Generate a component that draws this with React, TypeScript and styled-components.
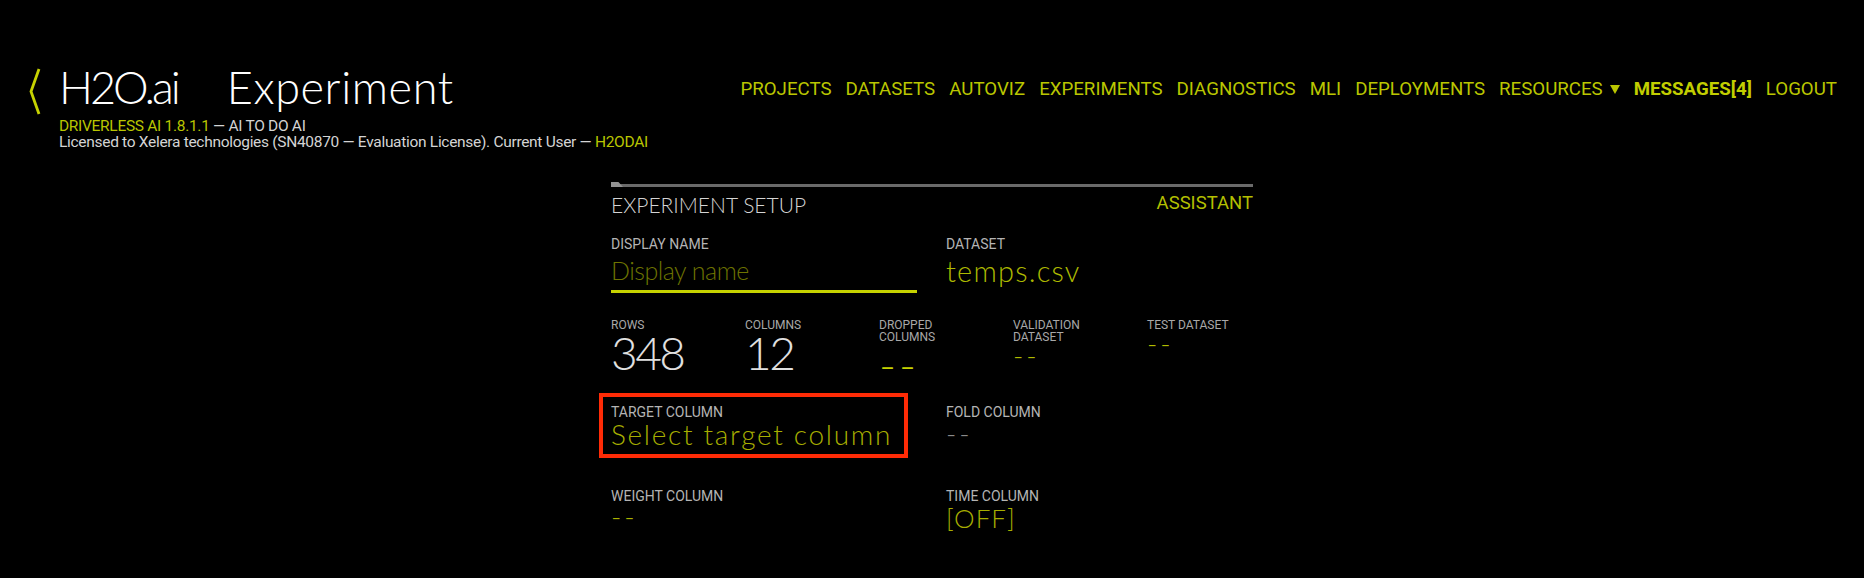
import React from 'react';
import styled, { createGlobalStyle } from 'styled-components';

const THIN = 'Lato, Roboto, "Liberation Sans", sans-serif';

const GlobalStyle = createGlobalStyle`
  html, body {
    margin: 0;
    padding: 0;
    background: #000;
  }
  body {
    font-family: Roboto, "Liberation Sans", sans-serif;
    color: #fff;
    overflow: hidden;
  }
  * { box-sizing: border-box; }
`;

const NAV_ITEMS = [
  { label: 'PROJECTS' },
  { label: 'DATASETS' },
  { label: 'AUTOVIZ' },
  { label: 'EXPERIMENTS' },
  { label: 'DIAGNOSTICS' },
  { label: 'MLI' },
  { label: 'DEPLOYMENTS' },
  { label: 'RESOURCES', caret: true },
  { label: 'MESSAGES[4]', bold: true },
  { label: 'LOGOUT' },
];

const Page = styled.div`
  min-height: 578px;
  background: #000;
`;

const Header = styled.header`
  display: flex;
  justify-content: space-between;
  align-items: flex-start;
  padding: 67px 27px 0 29px;
`;

const Brand = styled.div`
  display: flex;
  align-items: flex-start;
`;

const Chevron = styled.svg`
  flex-shrink: 0;
  margin-top: 1px;
`;

const BrandText = styled.div`
  margin-left: 18px;
`;

const Title = styled.h1`
  margin: -2px 0 8px;
  display: flex;
  gap: 49px;
  font-family: ${THIN};
  font-size: 45px;
  line-height: 45px;
  font-weight: 300;
  color: #fff;
`;

const TitlePart = styled.span<{ $spacing: number }>`
  letter-spacing: ${p => p.$spacing}px;
`;

const Meta = styled.div`
  font-size: 15.5px;
  line-height: 16px;
  color: #d4d4d4;
  letter-spacing: -0.3px;
  white-space: nowrap;
`;

const Accent = styled.span`
  color: #b9c500;
`;

const Nav = styled.nav`
  display: flex;
  align-items: center;
  gap: 14px;
  margin-top: 13.3px;
`;

const NavItem = styled.a<{ $bold?: boolean }>`
  display: flex;
  align-items: center;
  gap: 7px;
  font-size: 18.7px;
  line-height: 18.7px;
  font-weight: ${p => (p.$bold ? 700 : 400)};
  color: ${p => (p.$bold ? '#c2ce00' : '#bac600')};
  text-decoration: none;
  white-space: nowrap;
`;

const Panel = styled.main`
  width: 642px;
  margin: 34px auto 0;
`;

const Progress = styled.div`
  position: relative;
  height: 3px;
  background: #6a6a6a;

  &::before {
    content: '';
    position: absolute;
    left: 0;
    top: -2px;
    width: 12px;
    height: 5px;
    background: #929292;
    clip-path: polygon(0 0, 62% 0, 100% 100%, 0 100%);
  }
`;

const PanelHead = styled.div`
  display: flex;
  justify-content: space-between;
  align-items: flex-start;
  margin-top: 8px;
`;

const PanelTitle = styled.h2`
  margin: -1px 0 1px;
  font-family: ${THIN};
  font-size: 21px;
  line-height: 21px;
  font-weight: 300;
  color: #d4d4d4;
`;

const Assistant = styled.a`
  margin-top: -1.5px;
  font-size: 18.5px;
  line-height: 18.5px;
  color: #b3bf00;
  text-decoration: none;
`;

const FieldRow = styled.div<{ $gap: number }>`
  display: grid;
  grid-template-columns: 335px 1fr;
  margin-top: ${p => p.$gap}px;
`;

const Field = styled.div<{ $highlight?: boolean }>`
  position: relative;

  ${p =>
    p.$highlight &&
    `
    &::after {
      content: '';
      position: absolute;
      top: -12px;
      left: -12px;
      bottom: -10px;
      width: 301px;
      border: 4px solid #ff2b06;
      pointer-events: none;
    }
  `}
`;

const Label = styled.div`
  font-size: 14px;
  line-height: 14px;
  color: #b4b4b4;
  white-space: nowrap;
`;

const NameInput = styled.input`
  display: block;
  width: 306px;
  height: 41.7px;
  margin: 0;
  padding: 6.5px 0 8.2px;
  border: none;
  border-bottom: 3px solid #c6d200;
  background: transparent;
  font-family: ${THIN};
  font-size: 25px;
  line-height: 24px;
  font-weight: 300;
  letter-spacing: -0.5px;
  color: #b3bf00;
  outline: none;

  &::placeholder {
    color: #6d7300;
    opacity: 1;
  }
`;

const Value = styled.div<{ $size: number; $offset?: number; $color: string; $spacing?: number }>`
  margin-top: ${p => p.$offset ?? 0}px;
  font-family: ${THIN};
  font-size: ${p => p.$size}px;
  line-height: ${p => p.$size}px;
  font-weight: 300;
  color: ${p => p.$color};
  letter-spacing: ${p => p.$spacing ?? 0}px;
  white-space: nowrap;
`;

const Stats = styled.div`
  display: grid;
  grid-template-columns: repeat(4, 134px) 1fr;
  margin-top: 27.5px;
`;

const StatLabel = styled.div`
  font-size: 12px;
  line-height: 11.7px;
  color: #a8a8a8;
  white-space: nowrap;
`;

type Stat = { label: React.ReactNode; value: string; kind: 'number' | 'dashLg' | 'dashSm' };

const STATS: Stat[] = [
  { label: 'ROWS', value: '348', kind: 'number' },
  { label: 'COLUMNS', value: '12', kind: 'number' },
  { label: <>DROPPED<br />COLUMNS</>, value: '--', kind: 'dashLg' },
  { label: <>VALIDATION<br />DATASET</>, value: '--', kind: 'dashSm' },
  { label: 'TEST DATASET', value: '--', kind: 'dashSm' },
];

function StatValue({ kind, value }: { kind: Stat['kind']; value: string }) {
  if (kind === 'number') {
    return <Value $size={46} $offset={-1.5} $color="#e0e0e0" $spacing={-2.5}>{value}</Value>;
  }
  if (kind === 'dashLg') {
    return <Value $size={46} $offset={-1.5} $color="#c6d200" $spacing={3}>{value}</Value>;
  }
  return <Value $size={28} $offset={-2.5} $color="#b0bc00" $spacing={3}>{value}</Value>;
}

export default function App() {
  return (
    <Page>
      <GlobalStyle />
      <Header>
        <Brand>
          <Chevron width="12" height="47" viewBox="0 0 12 47">
            <polyline points="10,1 2,23.5 10,46" fill="none" stroke="#c6d200" strokeWidth="2.8" strokeLinejoin="miter" />
          </Chevron>
          <BrandText>
            <Title>
              <TitlePart $spacing={-3}>H2O.ai</TitlePart>
              <TitlePart $spacing={0.6}>Experiment</TitlePart>
            </Title>
            <Meta>
              <Accent>DRIVERLESS AI 1.8.1.1</Accent> — AI TO DO AI
            </Meta>
            <Meta>
              Licensed to Xelera technologies (SN40870 — Evaluation License). Current User — <Accent>H2ODAI</Accent>
            </Meta>
          </BrandText>
        </Brand>
        <Nav>
          {NAV_ITEMS.map(item => (
            <NavItem key={item.label} href="#" $bold={item.bold}>
              {item.label}
              {item.caret && (
                <svg width="10" height="9" viewBox="0 0 10 9">
                  <polygon points="0,0 10,0 5,9" fill="#bac600" />
                </svg>
              )}
            </NavItem>
          ))}
        </Nav>
      </Header>

      <Panel>
        <Progress />
        <PanelHead>
          <PanelTitle>EXPERIMENT SETUP</PanelTitle>
          <Assistant href="#">ASSISTANT</Assistant>
        </PanelHead>

        <FieldRow $gap={21}>
          <Field>
            <Label>DISPLAY NAME</Label>
            <NameInput placeholder="Display name" />
          </Field>
          <Field>
            <Label>DATASET</Label>
            <Value $size={29} $offset={5} $color="#adb900" $spacing={1.2}>temps.csv</Value>
          </Field>
        </FieldRow>

        <Stats>
          {STATS.map((s, i) => (
            <div key={i}>
              <StatLabel>{s.label}</StatLabel>
              <StatValue kind={s.kind} value={s.value} />
            </div>
          ))}
        </Stats>

        <FieldRow $gap={17}>
          <Field $highlight>
            <Label>TARGET COLUMN</Label>
            <Value $size={28} $offset={1.2} $color="#a7ae00" $spacing={1.7}>Select target column</Value>
          </Field>
          <Field>
            <Label>FOLD COLUMN</Label>
            <Value $size={28} $offset={0} $color="#8a8a8a" $spacing={3}>--</Value>
          </Field>
        </FieldRow>

        <FieldRow $gap={41}>
          <Field>
            <Label>WEIGHT COLUMN</Label>
            <Value $size={28} $offset={-1} $color="#a9b300" $spacing={3}>--</Value>
          </Field>
          <Field>
            <Label>TIME COLUMN</Label>
            <Value $size={26} $offset={2} $color="#a7ae00" $spacing={1}>[OFF]</Value>
          </Field>
        </FieldRow>
      </Panel>
    </Page>
  );
}
